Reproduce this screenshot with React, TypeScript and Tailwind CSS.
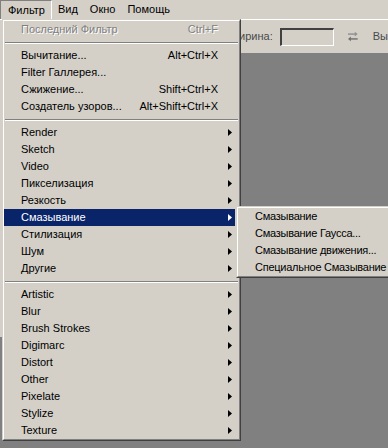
import React from "react";

const F = "font-['Liberation_Sans',Arial,sans-serif] text-[11px] leading-none";

function Arrow({ white }: { white?: boolean }) {
  return (
    <svg width="4" height="7" viewBox="0 0 4 7" className="absolute right-[3px] top-[5px]">
      <path d="M0 0 L4 3.5 L0 7 Z" fill={white ? "#ffffff" : "#000000"} />
    </svg>
  );
}

function Row({
  label,
  shortcut,
  sub,
  active,
  disabled,
}: {
  label: string;
  shortcut?: string;
  sub?: boolean;
  active?: boolean;
  disabled?: boolean;
}) {
  return (
    <div
      className={`relative h-[17px] w-[231px] flex items-center pl-[17px] pr-[17px] ${
        active ? "bg-[#0a246a] text-white" : disabled ? "text-[#808080] [text-shadow:1px_1px_0_#ffffff]" : "text-black"
      }`}
    >
      <span className="flex-1 whitespace-nowrap">{label}</span>
      {shortcut && <span className="whitespace-nowrap">{shortcut}</span>}
      {sub && <Arrow white={active} />}
    </div>
  );
}

function Sep() {
  return (
    <div className="h-[9px] flex flex-col justify-center px-px">
      <div className="h-px bg-[#808080]" />
      <div className="h-px bg-white" />
    </div>
  );
}

export default function App() {
  return (
    <div className={`relative w-[388px] h-[448px] overflow-hidden bg-[#808080] ${F}`}>
      {/* menubar */}
      <div className="h-[19px] bg-[#d4d0c8] flex items-stretch">
        <div className="pl-[7px] pr-[6px] flex items-center border-t border-l border-[#808080] border-r border-r-white">Фильтр</div>
        <div className="px-[6px] flex items-center">Вид</div>
        <div className="px-[6px] flex items-center">Окно</div>
        <div className="px-[6px] flex items-center">Помощь</div>
      </div>
      {/* toolbar */}
      <div className="h-[34px] bg-[#d4d0c8] border-t border-white flex items-center pl-[229px] text-[#4a4a4a]">
        <span>Ширина:</span>
        <div className="ml-[7px] w-[56px] h-[18px] border-t-2 border-l-2 border-[#404040] border-r border-b border-r-white border-b-white bg-[#d4d0c8]" />
        <svg width="12" height="11" viewBox="0 0 12 11" className="ml-[13px]">
          <path d="M1 3 H9" stroke="#909090" strokeWidth="1.5" />
          <path d="M8 0.5 L11 3 L8 5.5 Z" fill="#909090" />
          <path d="M3 8 H11" stroke="#707070" strokeWidth="1.5" />
          <path d="M4 5.5 L1 8 L4 10.5 Z" fill="#707070" />
        </svg>
        <span className="ml-[14px]">Вы</span>
      </div>
      {/* canvas */}
      <div className="flex items-start">
        <div className="w-[2px] h-[284px] bg-[#d4d0c8]" />
      </div>

      {/* main menu */}
      <div className="absolute left-[2px] top-[19px] w-[239px] h-[422px] border-t border-l border-[#d4d0c8] border-r border-b border-r-[#404040] border-b-[#404040]">
        <div className="w-full h-full bg-[#d4d0c8] border-t border-l border-white border-r border-b border-r-[#808080] border-b-[#808080]">
          <Row label="Последний Фильтр" shortcut="Ctrl+F" disabled />
          <Sep />
          <Row label="Вычитание..." shortcut="Alt+Ctrl+X" />
          <Row label="Filter Галлерея..." />
          <Row label="Сжижение..." shortcut="Shift+Ctrl+X" />
          <Row label="Создатель узоров..." shortcut="Alt+Shift+Ctrl+X" />
          <Sep />
          <Row label="Render" sub />
          <Row label="Sketch" sub />
          <Row label="Video" sub />
          <Row label="Пикселизация" sub />
          <Row label="Резкость" sub />
          <Row label="Смазывание" sub active />
          <Row label="Стилизация" sub />
          <Row label="Шум" sub />
          <Row label="Другие" sub />
          <Sep />
          <Row label="Artistic" sub />
          <Row label="Blur" sub />
          <Row label="Brush Strokes" sub />
          <Row label="Digimarc" sub />
          <Row label="Distort" sub />
          <Row label="Other" sub />
          <Row label="Pixelate" sub />
          <Row label="Stylize" sub />
          <Row label="Texture" sub />
        </div>
      </div>

      {/* submenu */}
      <div className="absolute left-[236px] top-[206px] w-[172px] h-[72px] border-t border-l border-[#d4d0c8] border-r border-b border-r-[#404040] border-b-[#404040]">
        <div className="w-full h-full bg-[#d4d0c8] border-t border-l border-white border-r border-b border-r-[#808080] border-b-[#808080]">
          {["Смазывание", "Смазывание Гаусса...", "Смазывание движения...", "Специальное Смазывание"].map((t) => (
            <div key={t} className="h-[17px] flex items-center pl-[17px] whitespace-nowrap text-black tracking-[-0.25px]">
              {t}
            </div>
          ))}
        </div>
      </div>
    </div>
  );
}
